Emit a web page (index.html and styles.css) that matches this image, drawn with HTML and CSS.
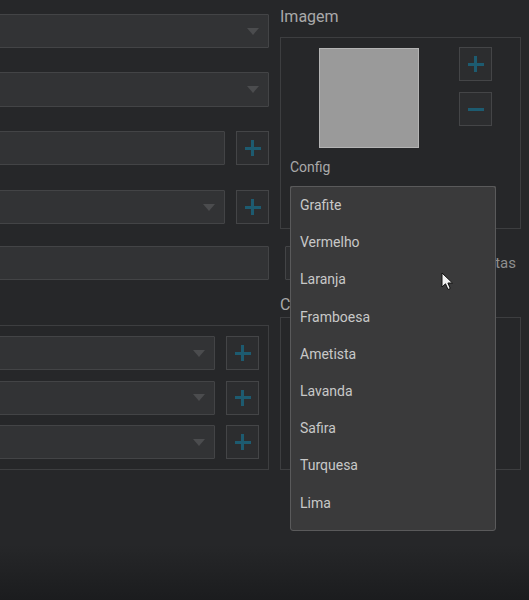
FILE: index.html
```html
<!DOCTYPE html>
<html>
<head>
<meta charset="utf-8">
<link rel="stylesheet" href="styles.css">
</head>
<body>
<div class="app">
  <div class="left">
    <div class="lrow r1"><div class="combo"><span class="arrow"></span></div></div>
    <div class="lrow r2"><div class="combo"><span class="arrow"></span></div></div>
    <div class="lrow r3"><div class="field"></div><div class="btn"><span class="plus"></span></div></div>
    <div class="lrow r4"><div class="combo"><span class="arrow"></span></div><div class="btn"><span class="plus"></span></div></div>
    <div class="lrow r5"><div class="field"></div></div>
    <div class="lgroup">
      <div class="lrow"><div class="combo"><span class="arrow"></span></div><div class="btn"><span class="plus"></span></div></div>
      <div class="lrow"><div class="combo"><span class="arrow"></span></div><div class="btn"><span class="plus"></span></div></div>
      <div class="lrow"><div class="combo"><span class="arrow"></span></div><div class="btn"><span class="plus"></span></div></div>
    </div>
  </div>
  <div class="right">
    <div class="gtitle">Imagem</div>
    <div class="rgroup img-group">
      <div class="img-row">
        <div class="preview"></div>
        <div class="img-btns">
          <div class="btn"><span class="plus"></span></div>
          <div class="btn"><span class="minus"></span></div>
        </div>
      </div>
      <div class="sublabel">Config</div>
      <div class="combo config-combo"><span class="arrow"></span></div>
    </div>
    <div class="alert-row">
      <div class="field small-field"></div>
      <span class="alert-label">Alertas</span>
    </div>
    <div class="gtitle2">Cores</div>
    <div class="rgroup colors-group"></div>
  </div>
</div>
<div class="popup">
  <div class="item">Grafite</div>
  <div class="item">Vermelho</div>
  <div class="item">Laranja</div>
  <div class="item">Framboesa</div>
  <div class="item">Ametista</div>
  <div class="item">Lavanda</div>
  <div class="item">Safira</div>
  <div class="item">Turquesa</div>
  <div class="item">Lima</div>
</div>
<svg class="cursor" width="13" height="19" viewBox="0 0 13 19"><path d="M1 1 L1 15 L4.5 11.8 L7 17.5 L9.3 16.5 L6.9 11 L11.5 11 Z" fill="#f2f2f2" stroke="#111" stroke-width="1" stroke-linejoin="round"/></svg>
</body>
</html>
```
FILE: styles.css
```css
* { box-sizing: border-box; }
html, body { margin: 0; padding: 0; }
body {
  width: 529px;
  height: 600px;
  overflow: hidden;
  position: relative;
  font-family: Roboto, "Liberation Sans", sans-serif;
  background: linear-gradient(to bottom, #262729 0px, #262729 545px, #1b1c1e 600px);
  color: #aaaaaa;
}
.app { display: flex; gap: 11px; }
.left { margin-left: -10px; width: 279px; display: flex; flex-direction: column; }
.right { width: 241px; display: flex; flex-direction: column; }

.lrow { height: 34px; display: flex; gap: 11px; }
.r1 { margin-top: 14px; }
.r2 { margin-top: 24px; height: 35px; }
.r3 { margin-top: 24px; }
.r4 { margin-top: 25px; }
.r5 { margin-top: 22px; }

.combo, .field {
  flex: 1;
  height: 100%;
  background: #323335;
  border: 1px solid #434446;
  border-radius: 1px;
  display: flex;
  align-items: center;
  justify-content: flex-end;
  padding-right: 9px;
}
.arrow {
  width: 0; height: 0;
  border-left: 6px solid transparent;
  border-right: 6px solid transparent;
  border-top: 7px solid #4b4c4e;
}
.btn {
  width: 33px;
  height: 34px;
  flex: none;
  background: #2c2d2f;
  border: 1px solid #444547;
  display: flex;
  align-items: center;
  justify-content: center;
}
.plus, .minus { position: relative; width: 16px; height: 16px; display: block; }
.plus::before, .plus::after, .minus::before {
  content: "";
  position: absolute;
  background: #1d5b70;
}
.plus::before, .minus::before { left: 0; top: 6.5px; width: 16px; height: 3px; }
.plus::after { top: 0; left: 6.5px; width: 3px; height: 16px; }

.lgroup {
  margin-top: 45px;
  height: 145px;
  border: 1px solid #3d3e40;
  padding: 10px 9px 0 0;
  display: flex;
  flex-direction: column;
  gap: 10.5px;
}

.gtitle { height: 37px; line-height: 34px; font-size: 16px; color: #a9a9a9; }
.rgroup { border: 1px solid #3d3e40; }
.img-group { height: 192px; padding: 0 0 0 9px; }
.img-row { display: flex; padding-top: 9px; }
.preview {
  margin-left: 29px;
  margin-top: 1px;
  width: 100px;
  height: 100px;
  background: #9a9a9a;
  border: 1px solid #b4b4b4;
}
.img-btns { margin-left: 40px; display: flex; flex-direction: column; gap: 11px; }
.sublabel { margin-top: 9px; line-height: 20px; height: 20px; font-size: 14px; color: #a9a9a9; }
.config-combo { margin-top: 9px; flex: none; width: 206px; height: 34px; background: #3a3a3b; border-color: #555; }

.alert-row { margin-top: 17px; height: 34px; display: flex; align-items: center; padding-left: 5px; padding-right: 5px; }
.small-field { flex: none; width: 170px; height: 34px; background: #2c2d2f; }
.alert-label { margin-left: auto; font-size: 15px; color: #8f8f8f; }

.gtitle2 { margin-top: 15px; line-height: 20px; height: 20px; font-size: 16px; color: #a9a9a9; }
.colors-group { margin-top: 2px; height: 153px; }

.popup {
  position: absolute;
  left: 290px;
  top: 186px;
  width: 206px;
  height: 345px;
  background: #3a3a3b;
  border: 1px solid #5a5a5b;
  border-radius: 3px;
}
.item {
  height: 37.2px;
  line-height: 37.2px;
  padding-left: 9px;
  font-size: 14px;
  color: #c8c8c8;
}
.cursor { position: absolute; left: 441px; top: 272px; }
```
